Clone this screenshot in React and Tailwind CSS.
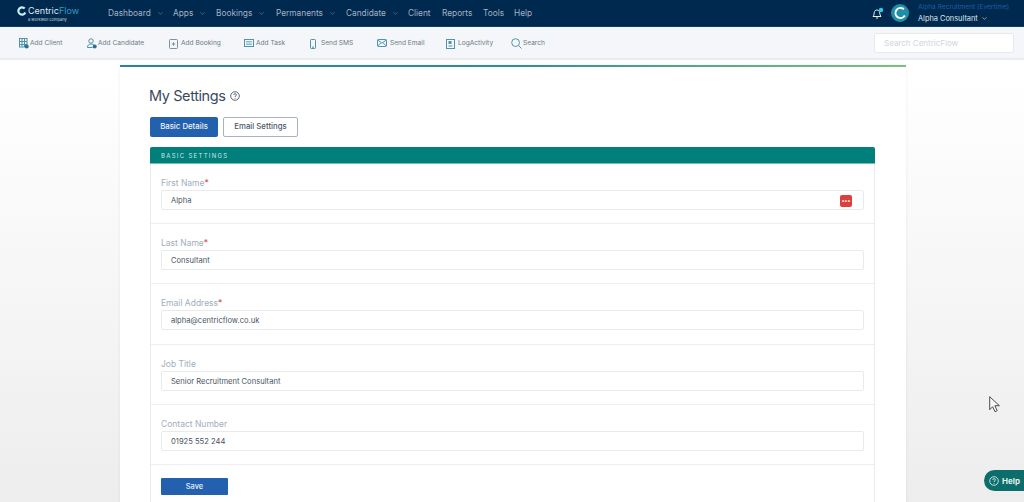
import React from "react";
import { ChevronDown } from "lucide-react";

const F = { fontFamily: '"Inter","Open Sans",sans-serif' };

const nav = [
  ["Dashboard", true, "w-[65px]"],
  ["Apps", true, "w-[43px]"],
  ["Bookings", true, "w-[60px]"],
  ["Permanents", true, "w-[70px]"],
  ["Candidate", true, "w-[62px]"],
  ["Client", false, "w-[34px]"],
  ["Reports", false, "w-[41px]"],
  ["Tools", false, "w-[31px]"],
  ["Help", false, "w-[30px]"],
];

const stroke = { fill: "none", stroke: "#4f93ad", strokeWidth: 1 };
const icons = {
  client: (
    <svg width="10" height="11" viewBox="0 0 10 11" {...stroke}>
      <rect x="0.5" y="0.5" width="7.5" height="8.5" />
      <path d="M0.5 3.5h7.5M0.5 6.5h7.5M3 .5v8.5M5.5.5v8.5" />
      <circle cx="7.7" cy="8.6" r="2" fill="#2f6f8d" stroke="none" />
    </svg>
  ),
  candidate: (
    <svg width="10" height="11" viewBox="0 0 10 11" {...stroke}>
      <circle cx="4" cy="3" r="2.2" />
      <path d="M0.5 9.5c0-2.5 1.5-3.5 3.5-3.5s3 .6 3 1.4M0.5 9.5h5" />
      <circle cx="7.7" cy="8.4" r="2" fill="#2f6f8d" stroke="none" />
    </svg>
  ),
  booking: (
    <svg width="9" height="10" viewBox="0 0 9 10" fill="none" stroke="#6f8a99" strokeWidth="0.9">
      <rect x="0.5" y="0.5" width="8" height="9" rx="0.8" />
      <path d="M4.5 3.2v3.6M2.7 5h3.6" />
    </svg>
  ),
  task: (
    <svg width="10" height="8" viewBox="0 0 10 8" {...stroke}>
      <rect x="0.5" y="0.5" width="9" height="7" />
      <path d="M2 2.5h6M2 4h6M2 5.5h6" stroke="#8fbccd" />
    </svg>
  ),
  sms: (
    <svg width="6" height="10" viewBox="0 0 6 10" {...stroke}>
      <rect x="0.5" y="0.5" width="5" height="9" rx="0.8" />
      <path d="M2 8.2h2" />
    </svg>
  ),
  email: (
    <svg width="10" height="8" viewBox="0 0 10 8" {...stroke}>
      <rect x="0.5" y="0.5" width="9" height="7" rx="0.8" />
      <path d="M0.7 1l4.3 3.2L9.3 1M0.7 7l3-3M9.3 7l-3-3" />
    </svg>
  ),
  log: (
    <svg width="9" height="10" viewBox="0 0 9 10" {...stroke}>
      <rect x="0.5" y="0.5" width="8" height="9" />
      <rect x="2.5" y="2" width="3" height="3" fill="#4f93ad" stroke="none" />
      <path d="M2.5 7h4" />
    </svg>
  ),
  search: (
    <svg width="11" height="11" viewBox="0 0 11 11" {...stroke}>
      <circle cx="4.6" cy="4.6" r="3.9" />
      <path d="M7.5 7.5l3 3" />
    </svg>
  ),
};

const tools = [
  ["client", "Add Client", "w-[68px]", "w-[11px]"],
  ["candidate", "Add Candidate", "w-[82px]", "w-[11px]"],
  ["booking", "Add Booking", "w-[75px]", "w-[12px]"],
  ["task", "Add Task", "w-[66px]", "w-[12px]"],
  ["sms", "Send SMS", "w-[67px]", "w-[11px]"],
  ["email", "Send Email", "w-[69px]", "w-[13px]"],
  ["log", "LogActivity", "w-[65px]", "w-[12px]"],
  ["search", "Search", "w-[40px]", "w-[12px]"],
];

const fields = [
  ["First Name", true, "Alpha", true, "h-[60px]"],
  ["Last Name", true, "Consultant", false, "h-[60px]"],
  ["Email Address", true, "alpha@centricflow.co.uk", false, "h-[61px]"],
  ["Job Title", false, "Senior Recruitment Consultant", false, "h-[60px]"],
  ["Contact Number", false, "01925 552 244", false, "h-[60px]"],
];

export default function App() {
  return (
    <div
      style={F}
      className="relative h-[502px] w-[1024px] overflow-hidden bg-gradient-to-b from-white from-15% to-[#ededed]"
    >
      <header className="flex h-[27px] items-center border-b border-[#0a3f6e] bg-[#00294f] pl-[17px]">
        <div className="flex w-[91px] flex-col">
          <div className="flex h-[13px] items-center">
            <svg width="10" height="10" viewBox="0 0 10 10" className="mr-[1px]">
              <circle cx="5" cy="5" r="3.6" fill="none" stroke="#cfeef5" strokeWidth="2.2" strokeDasharray="18 5" transform="rotate(25 5 5)" />
            </svg>
            <span className="text-[9px] leading-none text-[#dfe8ee]">Centric</span>
            <span className="text-[9px] leading-none text-[#2f9fc4]">Flow</span>
          </div>
          <span className="ml-[11px] text-[4px] leading-[5px] text-[#c9d3dc]">a workwell company</span>
        </div>
        <nav className="flex items-center">
          {nav.map(([t, c, w]) => (
            <div key={t} className={`flex items-center gap-[6px] text-[8.3px] text-[#a3b3c4] ${w}`}>
              <span>{t}</span>
              {c && <ChevronDown size={7} className="text-[#6f8aa3]" />}
            </div>
          ))}
        </nav>
        <div className="ml-auto flex items-center pr-[14px]">
          <svg width="13" height="13" viewBox="0 0 13 13" className="mr-[7px]">
            <path d="M2 9.5c1-1 1-2 1.2-3.7C3.500 3.500 4.800 3 6 3s2.400.8 2.700 2.800c.2 1.700.4 2.700 1.300 3.700z" fill="none" stroke="#e8eef3" strokeWidth="1" />
            <path d="M5 11h2" stroke="#e8eef3" />
            <circle cx="10" cy="3" r="2.200" fill="#35c5e8" />
          </svg>
          <svg width="18" height="18" viewBox="0 0 18 18" className="mr-[9px]">
            <circle cx="9" cy="9" r="9" fill="#1f8ea6" />
            <circle cx="9.500" cy="9" r="5" fill="none" stroke="#ffffff" strokeWidth="2" strokeDasharray="24 8" transform="rotate(30 9.500 9)" />
          </svg>
          <div className="flex w-[92px] flex-col">
            <span className="text-[6.600px] leading-[11px] whitespace-nowrap text-[#1a5fa8]">Alpha Recruitment (Evertime)</span>
            <span className="flex items-center gap-[3px] text-[7.400px] leading-[11px] text-[#dfe8ee]">
              Alpha Consultant <ChevronDown size={7} />
            </span>
          </div>
        </div>
      </header>

      <div className="flex h-[33px] items-center border-b-2 border-[#e9ebef] bg-[#f4f6f9] pl-[19px] pr-[10px]">
        {tools.map(([k, t, w, iw]) => (
          <div key={t} className={`mt-[2px] flex items-center ${w}`}>
            <span className={`flex shrink-0 ${iw}`}>{icons[k]}</span>
            <span className="text-[6.600px] whitespace-nowrap text-[#6f7a87]">{t}</span>
          </div>
        ))}
        <div className="ml-auto flex h-[20px] w-[140px] items-center rounded-[2px] border border-[#e6e9ef] bg-white pl-[9px] text-[8px] text-[#ced6e2]">
          Search CentricFlow
        </div>
      </div>

      <main className="mx-[120px] mt-[5px] h-[440px] w-[786px] bg-white shadow-[0_0_3px_rgba(0,0,0,0.08)]">
        <div className="h-[2px] bg-gradient-to-r from-[#2f7f9f] via-[#2f8f8f] to-[#7fbf80]" />
        <div className="pl-[30px] pr-[31px]">
          <h1 className="mt-[20px] flex h-[18px] -translate-x-px items-center gap-[4px] text-[14.500px] tracking-[-0.4px] text-[#3a4a5e]">
            My Settings
            <svg width="10" height="10" viewBox="0 0 10 10" fill="none" stroke="#4a5768" strokeWidth="0.9">
              <circle cx="5" cy="5" r="4.300" />
              <path d="M3.700 3.900c0-1.700 2.700-1.700 2.700 0 0 1-1.400 1-1.400 2.100M5 7v.8" />
            </svg>
          </h1>
          <div className="mt-[12px] flex gap-[5px]">
            <button className="block h-[20px] w-[68px] rounded-[2px] bg-[#2361ae] text-[7.800px] font-medium text-[#eef3fa]">Basic Details</button>
            <button className="block h-[20px] w-[75px] rounded-[2px] border border-[#a9b2c2] bg-white text-[7.800px] font-medium text-[#4b5768]">Email Settings</button>
          </div>
          <div className="mt-[10px] border-x border-[#e8ebf1] pb-[20px]">
            <div className="-mx-px flex h-[17px] items-center rounded-t-[2px] border-b border-[#6fbcb8] bg-[#007f7b] pl-[11px] text-[6px] tracking-[1.300px] text-[#cfe6e5]">
              BASIC SETTINGS
            </div>
            {fields.map(([l, req, v, dots, h]) => (
              <div key={l} className={`flex flex-col border-b border-[#eceef3] pl-[10px] pr-[10px] pt-[13px] ${h}`}>
                <label className="h-[13px] text-[8.500px] leading-[12px] text-[#a2adbd]">
                  {l}
                  {req && <span className="text-[#e0524a]">*</span>}
                </label>
                <div className="flex h-[20px] items-center justify-between rounded-[2px] border border-[#e8eaef] bg-white pl-[9px] pr-[11px] pt-px text-[7.600px] text-[#4a5563]">
                  {v}
                  {dots && (
                    <span className="flex h-[12px] w-[12px] items-center justify-center rounded-[2px] bg-[#dd403c] text-[6px] leading-none font-bold text-white">
                      •••
                    </span>
                  )}
                </div>
              </div>
            ))}
            <div className="pl-[10px] pt-[13px]">
              <button className="block h-[17px] w-[67px] rounded-[1px] bg-[#2361ae] text-[7.500px] font-medium text-[#e6eef8]">Save</button>
            </div>
          </div>
        </div>
      </main>

      <svg width="12" height="17" viewBox="0 0 12 17" className="absolute left-[989px] top-[396px]">
        <path d="M0.700 0.700v13l3-3 2.300 5 2.200-1-2.300-5h4.500z" fill="#f8f8f8" stroke="#3a3a3a" strokeWidth="0.9" />
      </svg>

      <div className="absolute left-[984px] top-[470px] flex h-[21px] w-[44px] items-center gap-[3px] rounded-l-full rounded-r-[8px] bg-[#0b6e6b] pl-[5px] text-[8px] font-bold text-[#e4f1f0]">
        <svg width="10" height="10" viewBox="0 0 10 10" fill="none" stroke="#d6ecea" strokeWidth="0.9">
          <circle cx="5" cy="5" r="4.300" />
          <path d="M3.700 3.900c0-1.700 2.700-1.700 2.700 0 0 1-1.400 1-1.400 2.100M5 7v.8" />
        </svg>
        Help
      </div>
    </div>
  );
}
